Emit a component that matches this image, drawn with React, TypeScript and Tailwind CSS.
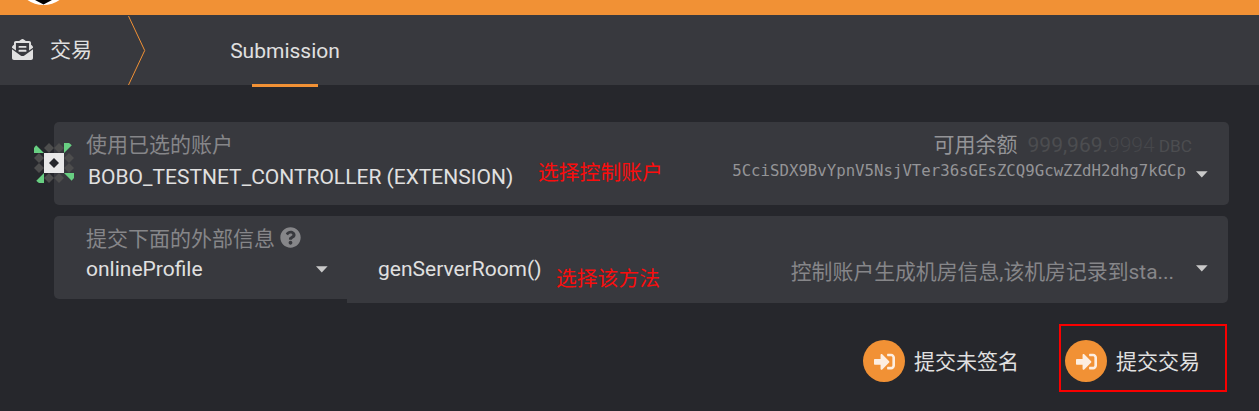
import { FaEnvelopeOpenText, FaQuestionCircle, FaSignInAlt } from "react-icons/fa";

const DIAMONDS = [
  [15, 5],
  [25, 5],
  [5, 15],
  [5, 25],
  [35, 15],
  [35, 25],
  [15, 35],
  [25, 35],
];

function Identicon() {
  return (
    <svg width="40" height="40" viewBox="0 0 40 40" className="absolute -left-5 top-[21px]">
      <clipPath id="disc">
        <circle cx="20" cy="20" r="25" />
      </clipPath>
      {DIAMONDS.map(([x, y]) => (
        <path key={`${x}-${y}`} d={`M${x} ${y - 5}l5 5-5 5-5-5z`} fill="#4d4d4d" />
      ))}
      <path
        clipPath="url(#disc)"
        fill="#68cf82"
        d="M0 0V10H10zM30 0V10L40 0zM30 30H40V40zM10 30V40H0z"
      />
      <path d="M10 10H30V30H10z" fill="#e8e8e8" />
      <path d="M20 15l5 5-5 5-5-5z" fill="#26272c" />
    </svg>
  );
}

function Caret() {
  return (
    <svg width="12" height="7" viewBox="0 0 12 7" className="shrink-0">
      <path d="M0 .3H11.6L5.8 6.5z" fill="#c9c9c9" />
    </svg>
  );
}

function ActionButton({ label }: { label: string }) {
  return (
    <button className="flex items-center gap-[9px] text-[#e0e0e0]">
      <span className="flex size-[42px] items-center justify-center rounded-full bg-[#f19135] text-[#fdeee1]">
        <FaSignInAlt size={21} />
      </span>
      <span className="mt-0.5 leading-8">{label}</span>
    </button>
  );
}

export default function App() {
  return (
    <div className="h-[411px] w-[1259px] overflow-hidden bg-[#26272c] font-['Roboto','Noto_Sans_CJK_SC',sans-serif] text-[21px] whitespace-nowrap text-[#e0e0e0]">
      <header className="h-[15px] bg-[#f19135] pl-[22px]">
        <svg width="42" height="15" viewBox="0 0 42 15">
          <path d="M2 -3Q10 5 21.500 5Q33 5 41 -3Z" fill="#fff" />
          <path d="M13 0L21.500 4.500L30 0Z" fill="#000" />
        </svg>
      </header>

      <nav className="flex h-[70px] bg-[#38393e]">
        <div className="flex w-[128px] items-center pl-3">
          <FaEnvelopeOpenText size={21} className="-mt-0.5" />
          <span className="ml-[17px] leading-8">交易</span>
        </div>
        <svg width="18" height="70" viewBox="0 0 18 70" fill="none">
          <path d="M.5 1L16.700 35.500L.5 70" stroke="#f19135" strokeWidth="1" />
        </svg>
        <div className="ml-[84px] flex h-[72px] w-[110px] flex-col items-center">
          <span className="mt-5 leading-8">Submission</span>
          <span className="mt-[17px] h-[3px] w-[66px] bg-[#f19135]" />
        </div>
      </nav>

      <main className="pt-[37px] pl-[54px]">
        <section className="relative flex h-[83px] w-[1175px] justify-between rounded-[5px] bg-[#38393e] pl-8">
          <Identicon />
          <div className="pt-2">
            <div className="leading-[30px] text-[#868689]">使用已选的账户</div>
            <div className="ml-0.5 mt-px leading-8">BOBO_TESTNET_CONTROLLER (EXTENSION)</div>
          </div>
          <span className="absolute left-[484px] top-[35px] text-[20.8px] leading-8 text-[#fb0d0d]">选择控制账户</span>
          <div className="flex pr-[21px] pt-2">
            <div className="flex flex-col items-end">
              <div className="-mr-1.5 flex items-baseline leading-[30px] text-[#4c4d50]">
                <span className="mr-2.5 text-[#949497]">可用余额</span>
                <span>999,969.</span>
                <span className="font-light text-[#46474b]">9994</span>
                <span className="ml-1 text-[17.3px]">DBC</span>
              </div>
              <div className="-mt-px font-['DejaVu_Sans_Mono',monospace] text-[15.71px] leading-[22px] text-[#949497]">
                5CciSDX9BvYpnV5NsjVTer36sGEsZCQ9GcwZZdH2dhg7kGCp
              </div>
            </div>
            <div className="ml-2.5 mt-[41px]">
              <Caret />
            </div>
          </div>
        </section>

        <section className="relative mt-[11px] flex w-[1174px] items-start">
          <div className="h-[83px] w-[293px] rounded-l-[5px] bg-[#38393e] pl-8 pt-2">
            <div className="flex items-center leading-[30px] text-[#868689]">
              提交下面的外部信息
              <FaQuestionCircle size={21} className="-mt-[3px] ml-[5px]" />
            </div>
            <div className="-mt-px flex items-center justify-between pr-[19px]">
              <span className="leading-8">onlineProfile</span>
              <Caret />
            </div>
          </div>
          <div className="flex h-[87px] grow items-start rounded-r-[5px] bg-[#38393e] pl-[31px] pr-[20px] pt-[37px]">
            <span className="leading-8">genServerRoom()</span>
            <span className="ml-auto mt-[3px] text-[20.87px] leading-8 text-[#868689]">控制账户生成机房信息,该机房记录到sta...</span>
            <div className="ml-[22px] mt-3">
              <Caret />
            </div>
          </div>
          <span className="absolute left-[502px] top-[47px] text-[20.8px] leading-8 text-[#fb0d0d]">选择该方法</span>
        </section>

        <div className="mt-[21px] flex w-[1173px] items-start justify-end gap-10">
          <div className="pt-4">
            <ActionButton label="提交未签名" />
          </div>
          <div className="flex h-[68px] w-[168px] items-center border-2 border-[#f90000] pl-1 pt-1.5">
            <ActionButton label="提交交易" />
          </div>
        </div>
      </main>
    </div>
  );
}
